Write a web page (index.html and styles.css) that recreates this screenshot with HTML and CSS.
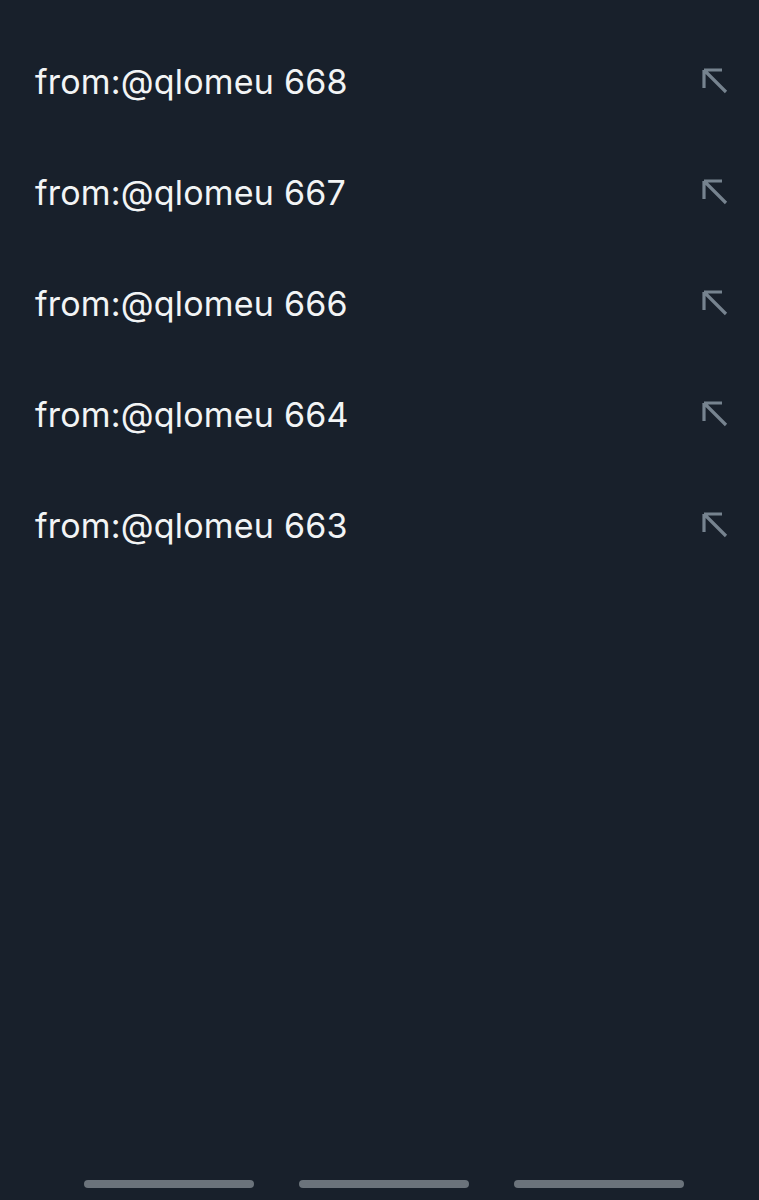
FILE: index.html
```html
<!DOCTYPE html>
<html lang="en">
    <head>
        <meta charset="UTF-8" />
        <meta name="viewport" content="width=device-width, initial-scale=1.0" />
        <title>Search</title>
        <link rel="stylesheet" href="styles.css">
    </head>
    <body>
        <ul class="suggestions">
            <li class="suggestion">
                <span class="query">from:@qlomeu 668</span>
                <svg class="fill-icon" viewBox="0 0 28 28"><path d="M3 3h18M3 3v18M3 3l22 22" /></svg>
            </li>
            <li class="suggestion">
                <span class="query">from:@qlomeu 667</span>
                <svg class="fill-icon" viewBox="0 0 28 28"><path d="M3 3h18M3 3v18M3 3l22 22" /></svg>
            </li>
            <li class="suggestion">
                <span class="query">from:@qlomeu 666</span>
                <svg class="fill-icon" viewBox="0 0 28 28"><path d="M3 3h18M3 3v18M3 3l22 22" /></svg>
            </li>
            <li class="suggestion">
                <span class="query">from:@qlomeu 664</span>
                <svg class="fill-icon" viewBox="0 0 28 28"><path d="M3 3h18M3 3v18M3 3l22 22" /></svg>
            </li>
            <li class="suggestion">
                <span class="query">from:@qlomeu 663</span>
                <svg class="fill-icon" viewBox="0 0 28 28"><path d="M3 3h18M3 3v18M3 3l22 22" /></svg>
            </li>
        </ul>
        <div class="nav-bar">
            <span class="nav-pill"></span>
            <span class="nav-pill"></span>
            <span class="nav-pill"></span>
        </div>
    </body>
</html>
```

FILE: styles.css
```css
html {
    background-color: #18202b;
}
body {
    margin: 0;
    height: 1200px;
    display: flex;
    flex-direction: column;
    font-family: Inter, 'Noto Sans', sans-serif;
    color: #f2f4f5;
}
.suggestions {
    list-style: none;
    margin: 0;
    padding: 26px 0 0;
    flex: 1;
}
.suggestion {
    height: 111px;
    display: flex;
    align-items: center;
    justify-content: space-between;
    padding: 0 30px 0 35px;
}
.query {
    font-size: 34px;
    letter-spacing: 0.2px;
}
.fill-icon {
    width: 28px;
    height: 28px;
    margin-bottom: 1px;
    fill: none;
    stroke: #76838f;
    stroke-width: 3.2;
}
.nav-bar {
    display: flex;
    justify-content: center;
    gap: 45px;
    padding: 0 0 12px 9px;
}
.nav-pill {
    width: 170px;
    height: 8px;
    border-radius: 4px;
    background-color: #6b737b;
}
```
